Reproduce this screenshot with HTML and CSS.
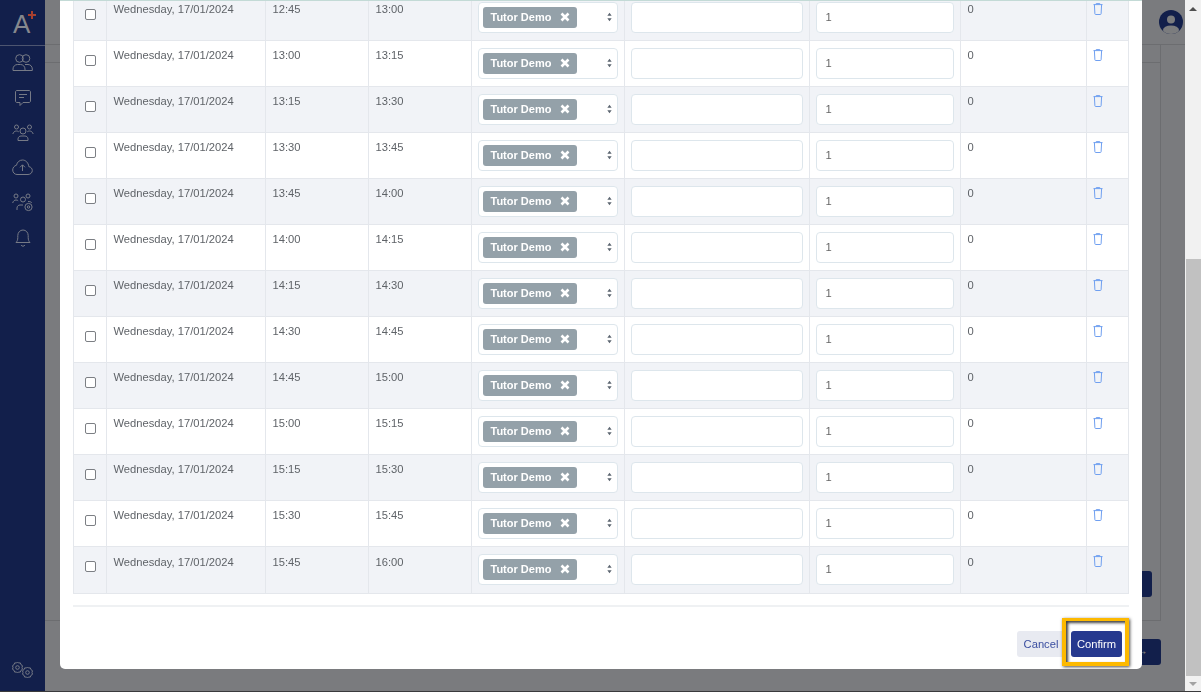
FILE: index.html
```html
<!DOCTYPE html>
<html lang="en">
<head>
<meta charset="utf-8">
<title>Confirm slots</title>
<link rel="stylesheet" href="styles.css">
</head>
<body>
<svg class="defs" aria-hidden="true">
  <symbol id="trash" viewBox="0 0 10 12"><path d="M3.2 1.2V.6h3.6v.6M.5 1.6h9M1.4 1.6l.5 9.2c0 .4.3.7.7.7h4.8c.4 0 .7-.3.7-.7l.5-9.2" fill="none" stroke="currentColor" stroke-width="1"/></symbol>
  <symbol id="updown" viewBox="0 0 6 10"><path d="M3 0l2.6 3.6H.4zM3 10L.4 6.400h5.200z" fill="currentColor"/></symbol>
  <symbol id="close" viewBox="0 0 10 10"><path d="M1.500 1.500l7 7M8.500 1.500l-7 7" stroke="currentColor" stroke-width="2.600" fill="none"/></symbol>
</svg>
<div class="app">
  <nav class="sidebar">
    <div class="logo"><span class="logo-a">A</span><span class="plus"></span></div>
    <ul class="nav-list">
      <li><svg width="21" height="18" viewBox="0 0 21 18" class="nav-ico"><circle cx="7.500" cy="4.500" r="3.800"/><circle cx="14" cy="4.500" r="3.800"/><path d="M1 16.500v-1.500c0-2.500 2-4.500 4.500-4.500h3c2.500 0 4.500 2 4.500 4.500v1.500zM13 10.500h3c2.500 0 4.300 2 4.300 4.500v1.500H13"/></svg></li>
      <li><svg width="18" height="18" viewBox="0 0 18 18" class="nav-ico"><path d="M3 1.500h12c.9 0 1.500.6 1.500 1.500v9c0 .9-.6 1.500-1.500 1.500H9l-3 3v-3H3c-.9 0-1.500-.6-1.500-1.500V3c0-.9.6-1.500 1.500-1.500zM5 5.500h8M5 8.500h5"/></svg></li>
      <li><svg width="22" height="18" viewBox="0 0 22 18" class="nav-ico"><circle cx="11" cy="7" r="3"/><circle cx="4.500" cy="3" r="2"/><circle cx="17.500" cy="3" r="2"/><path d="M6 16.500v-1.500c0-1.800 1.500-3 3-3h4c1.500 0 3 1.200 3 3v1.500zM.8 10c.6-1.800 1.800-3 3.700-3 1 0 1.700.3 2.200.8M21.200 10c-.6-1.800-1.800-3-3.700-3-1 0-1.700.3-2.200.8"/></svg></li>
      <li><svg width="21" height="17" viewBox="0 0 21 17" class="nav-ico"><path d="M5 15.500h11c2.500 0 4.300-1.800 4.300-4 0-2-1.500-3.600-3.500-3.900C16.500 3.800 13.700 1 10.500 1 7.500 1 5 3.200 4.500 6.200 2.300 6.700.7 8.700.7 11c0 2.500 2 4.500 4.300 4.500zM10.500 12V6M8 8.300l2.500-2.500L13 8.300"/></svg></li>
      <li><svg width="21" height="19" viewBox="0 0 21 19" class="nav-ico"><circle cx="11" cy="6.500" r="2.500"/><circle cx="4" cy="3" r="2"/><circle cx="16" cy="3" r="2"/><path d="M.7 10c.5-2 1.700-3 3.300-3 1 0 1.700.3 2.200.8M5 17v-2c0-1.800 1.500-3 3-3h3M16 8.500c1.500 0 3 .3 3.800 1.200"/><circle cx="16.500" cy="14" r="3.600"/><circle cx="16.500" cy="14" r="1.200"/></svg></li>
      <li><svg width="16" height="19" viewBox="0 0 16 19" class="nav-ico"><path d="M1 14.500c1.200-1.300 1.800-2.500 1.800-5V7.500C2.800 4.500 5 2 8 2s5.200 2.500 5.200 5.500v2c0 2.500.6 3.700 1.800 5zM6 17c.5.800 1.200 1.200 2 1.200s1.500-.4 2-1.200"/></svg></li>
    </ul>
    <svg class="nav-ico gear" width="22" height="18" viewBox="0 0 22 18"><path d="M5.500 1l1 1 1.800-.1.700 1.800 1.500 1-.5 1.800.5 1.800-1.500 1-.7 1.800-1.800-.1-1 1-1-1-1.800.1-.7-1.800-1.500-1 .5-1.800-.5-1.800 1.500-1 .7-1.800 1.800.1z"/><circle cx="5.500" cy="6.500" r="1.800"/><path d="M15.500 6l1 1 1.800-.1.700 1.800 1.500 1-.5 1.800.5 1.800-1.500 1-.7 1.800-1.800-.1-1 1-1-1-1.800.1-.7-1.800-1.500-1 .5-1.800-.5-1.800 1.500-1 .7-1.800 1.800.1z"/><circle cx="15.500" cy="11.500" r="1.800"/></svg>
  </nav>
  <main class="page">
    <header class="topbar">
      <svg class="avatar" width="24" height="24" viewBox="0 0 24 24"><defs><clipPath id="round"><circle cx="12" cy="12" r="12"/></clipPath></defs><circle cx="12" cy="12" r="12" fill="#121f4b"/><g clip-path="url(#round)" fill="#7b7c7e"><circle cx="12" cy="9.500" r="4"/><ellipse cx="12" cy="20" rx="8" ry="4.500"/></g></svg>
    </header>
    <div class="backdrop-panel">
      <div class="panel-head"></div>
      <div class="panel-action"></div>
    </div>
    <div class="next-btn"><span class="next-arrow">→</span></div>
  </main>
  <div class="scrollbar">
    <span class="arrow-up"></span>
    <div class="track"><div class="thumb"></div></div>
    <span class="arrow-down"></span>
  </div>
</div>

<div class="modal">
  <table class="slots">
    <colgroup><col class="c1"><col class="c2"><col class="c3"><col class="c4"><col class="c5"><col class="c6"><col class="c7"><col class="c8"><col class="c9"></colgroup>
    <tbody>
      <tr><td class="check"><span class="box"></span></td><td>Wednesday, 17/01/2024</td><td>12:45</td><td>13:00</td><td class="ctl"><div class="select"><span class="tag">Tutor Demo<svg class="x"><use href="#close"/></svg></span><svg class="updown"><use href="#updown"/></svg></div></td><td class="ctl"><div class="input"></div></td><td class="ctl"><div class="input">1</div></td><td>0</td><td class="del"><svg class="trash"><use href="#trash"/></svg></td></tr>
      <tr><td class="check"><span class="box"></span></td><td>Wednesday, 17/01/2024</td><td>13:00</td><td>13:15</td><td class="ctl"><div class="select"><span class="tag">Tutor Demo<svg class="x"><use href="#close"/></svg></span><svg class="updown"><use href="#updown"/></svg></div></td><td class="ctl"><div class="input"></div></td><td class="ctl"><div class="input">1</div></td><td>0</td><td class="del"><svg class="trash"><use href="#trash"/></svg></td></tr>
      <tr><td class="check"><span class="box"></span></td><td>Wednesday, 17/01/2024</td><td>13:15</td><td>13:30</td><td class="ctl"><div class="select"><span class="tag">Tutor Demo<svg class="x"><use href="#close"/></svg></span><svg class="updown"><use href="#updown"/></svg></div></td><td class="ctl"><div class="input"></div></td><td class="ctl"><div class="input">1</div></td><td>0</td><td class="del"><svg class="trash"><use href="#trash"/></svg></td></tr>
      <tr><td class="check"><span class="box"></span></td><td>Wednesday, 17/01/2024</td><td>13:30</td><td>13:45</td><td class="ctl"><div class="select"><span class="tag">Tutor Demo<svg class="x"><use href="#close"/></svg></span><svg class="updown"><use href="#updown"/></svg></div></td><td class="ctl"><div class="input"></div></td><td class="ctl"><div class="input">1</div></td><td>0</td><td class="del"><svg class="trash"><use href="#trash"/></svg></td></tr>
      <tr><td class="check"><span class="box"></span></td><td>Wednesday, 17/01/2024</td><td>13:45</td><td>14:00</td><td class="ctl"><div class="select"><span class="tag">Tutor Demo<svg class="x"><use href="#close"/></svg></span><svg class="updown"><use href="#updown"/></svg></div></td><td class="ctl"><div class="input"></div></td><td class="ctl"><div class="input">1</div></td><td>0</td><td class="del"><svg class="trash"><use href="#trash"/></svg></td></tr>
      <tr><td class="check"><span class="box"></span></td><td>Wednesday, 17/01/2024</td><td>14:00</td><td>14:15</td><td class="ctl"><div class="select"><span class="tag">Tutor Demo<svg class="x"><use href="#close"/></svg></span><svg class="updown"><use href="#updown"/></svg></div></td><td class="ctl"><div class="input"></div></td><td class="ctl"><div class="input">1</div></td><td>0</td><td class="del"><svg class="trash"><use href="#trash"/></svg></td></tr>
      <tr><td class="check"><span class="box"></span></td><td>Wednesday, 17/01/2024</td><td>14:15</td><td>14:30</td><td class="ctl"><div class="select"><span class="tag">Tutor Demo<svg class="x"><use href="#close"/></svg></span><svg class="updown"><use href="#updown"/></svg></div></td><td class="ctl"><div class="input"></div></td><td class="ctl"><div class="input">1</div></td><td>0</td><td class="del"><svg class="trash"><use href="#trash"/></svg></td></tr>
      <tr><td class="check"><span class="box"></span></td><td>Wednesday, 17/01/2024</td><td>14:30</td><td>14:45</td><td class="ctl"><div class="select"><span class="tag">Tutor Demo<svg class="x"><use href="#close"/></svg></span><svg class="updown"><use href="#updown"/></svg></div></td><td class="ctl"><div class="input"></div></td><td class="ctl"><div class="input">1</div></td><td>0</td><td class="del"><svg class="trash"><use href="#trash"/></svg></td></tr>
      <tr><td class="check"><span class="box"></span></td><td>Wednesday, 17/01/2024</td><td>14:45</td><td>15:00</td><td class="ctl"><div class="select"><span class="tag">Tutor Demo<svg class="x"><use href="#close"/></svg></span><svg class="updown"><use href="#updown"/></svg></div></td><td class="ctl"><div class="input"></div></td><td class="ctl"><div class="input">1</div></td><td>0</td><td class="del"><svg class="trash"><use href="#trash"/></svg></td></tr>
      <tr><td class="check"><span class="box"></span></td><td>Wednesday, 17/01/2024</td><td>15:00</td><td>15:15</td><td class="ctl"><div class="select"><span class="tag">Tutor Demo<svg class="x"><use href="#close"/></svg></span><svg class="updown"><use href="#updown"/></svg></div></td><td class="ctl"><div class="input"></div></td><td class="ctl"><div class="input">1</div></td><td>0</td><td class="del"><svg class="trash"><use href="#trash"/></svg></td></tr>
      <tr><td class="check"><span class="box"></span></td><td>Wednesday, 17/01/2024</td><td>15:15</td><td>15:30</td><td class="ctl"><div class="select"><span class="tag">Tutor Demo<svg class="x"><use href="#close"/></svg></span><svg class="updown"><use href="#updown"/></svg></div></td><td class="ctl"><div class="input"></div></td><td class="ctl"><div class="input">1</div></td><td>0</td><td class="del"><svg class="trash"><use href="#trash"/></svg></td></tr>
      <tr><td class="check"><span class="box"></span></td><td>Wednesday, 17/01/2024</td><td>15:30</td><td>15:45</td><td class="ctl"><div class="select"><span class="tag">Tutor Demo<svg class="x"><use href="#close"/></svg></span><svg class="updown"><use href="#updown"/></svg></div></td><td class="ctl"><div class="input"></div></td><td class="ctl"><div class="input">1</div></td><td>0</td><td class="del"><svg class="trash"><use href="#trash"/></svg></td></tr>
      <tr><td class="check"><span class="box"></span></td><td>Wednesday, 17/01/2024</td><td>15:45</td><td>16:00</td><td class="ctl"><div class="select"><span class="tag">Tutor Demo<svg class="x"><use href="#close"/></svg></span><svg class="updown"><use href="#updown"/></svg></div></td><td class="ctl"><div class="input"></div></td><td class="ctl"><div class="input">1</div></td><td>0</td><td class="del"><svg class="trash"><use href="#trash"/></svg></td></tr>
    </tbody>
  </table>
  <footer class="modal-foot">
    <button class="btn btn-cancel" type="button">Cancel</button>
    <button class="btn btn-confirm" type="button">Confirm</button>
    <span class="highlight"></span>
  </footer>
</div>
</body>
</html>
```

FILE: styles.css
```css
* { box-sizing: border-box; }
html, body { margin: 0; height: 100%; overflow: hidden; }
body { font-family: "Liberation Sans", Arial, sans-serif; font-size: 11.200px; color: #5f6368; background: #7a7b7e; }
.defs { position: absolute; width: 0; height: 0; }

.app { display: flex; width: 1201px; height: 692px; border-bottom: 1px solid #3a3a3c; }

.sidebar { width: 45px; flex: none; background: #121f4b; display: flex; flex-direction: column; align-items: center; }
.logo { width: 45px; height: 46px; border-bottom: 1px solid #4d5570; position: relative; }
.logo-a { position: absolute; left: 13px; top: 9px; font-size: 26px; line-height: 30px; color: #85878d; }
.plus { position: absolute; left: 28px; top: 11px; width: 8px; height: 8px; background: linear-gradient(#a8402f, #a8402f) center / 8px 2px no-repeat, linear-gradient(#a8402f, #a8402f) center / 2px 8px no-repeat; }
.nav-list { list-style: none; margin: 0; padding: 0; width: 45px; }
.nav-list li { height: 34.800px; display: flex; align-items: center; justify-content: center; }
.nav-ico, .nav-list li svg { fill: none; stroke: #767a86; stroke-width: 1; }
.gear { margin-top: auto; margin-bottom: 12px; }

.page { flex: 1; display: flex; flex-direction: column; position: relative; min-width: 0; background: #7a7b7e; }
.topbar { height: 45px; flex: none; display: flex; align-items: center; justify-content: flex-end; padding-right: 2px; border-bottom: 1px solid #6c6d70; }
.avatar { display: block; }
.backdrop-panel { width: 1116px; height: 576px; border-right: 1px solid #6c6d70; border-bottom: 1px solid #6c6d70; position: relative; align-self: flex-start; }
.panel-head { height: 18px; border-bottom: 1px solid #6c6d70; }
.panel-action { position: absolute; right: 8px; top: 526px; width: 60px; height: 26px; background: #121f4b; border-radius: 3px; }
.next-btn { position: absolute; left: 1056px; top: 639px; width: 60px; height: 26px; background: #121f4b; border-radius: 3px; color: #7a7b7e; text-align: right; padding-right: 13px; line-height: 24px; font-size: 13px; }

.scrollbar { width: 16px; flex: none; background: #f1f1f1; display: flex; flex-direction: column; align-items: center; position: relative; }
.arrow-up, .arrow-down { height: 17px; flex: none; display: block; width: 16px; position: relative; }
.arrow-up::after, .arrow-down::after { content: ""; position: absolute; left: 4px; border-left: 4px solid transparent; border-right: 4px solid transparent; }
.arrow-up::after { top: 7px; border-bottom: 4px solid #505050; }
.arrow-down::after { top: 6px; border-top: 4px solid #a3a3a3; }
.track { flex: 1; width: 100%; padding-top: 242px; padding-left: 1px; }
.thumb { height: 417px; background: #c1c1c1; }

.modal { position: absolute; left: 60px; top: 0; width: 1082px; height: 669px; background: #fff; border-top: 1px solid #c3dad6; border-radius: 0 0 5px 5px; padding: 0 13px; overflow: hidden; will-change: transform; }
.slots { border-collapse: collapse; table-layout: fixed; width: 1055px; margin-top: -7px; color: #5f6368; font-size: 11.200px; }
.c1 { width: 33px; } .c2 { width: 159px; } .c3 { width: 103px; } .c4 { width: 103px; } .c5 { width: 153px; } .c6 { width: 185px; } .c7 { width: 151px; } .c8 { width: 126px; } .c9 { width: 42px; }
.slots tr { height: 46px; }
.slots tr:nth-child(odd) { background: #f1f3f7; }
.slots td { border: 1px solid #e4e7ec; padding: 7px 6.500px; vertical-align: top; line-height: 14px; height: 46px; }
.slots tr:last-child td { height: 47px; padding-top: 8px; }
.slots td.check, .slots tr:last-child td.check { padding: 14px 0 0 11px; }
.box { display: block; width: 11px; height: 11px; margin-top: 0; border: 1px solid #7c7f84; border-radius: 2px; background: #fff; }
.slots td.ctl, .slots tr:last-child td.ctl { padding: 7px 6.500px 0 5.500px; }
.select { height: 31px; display: flex; align-items: center; padding-left: 4px; background: #fff; border: 1px solid #dde6ec; border-radius: 4px; position: relative; }
.tag { width: 94px; height: 21px; display: flex; align-items: center; padding: 0 0 1px 8px; background: #94a1a9; color: #fff; font-weight: 700; font-size: 11px; border-radius: 3px; }
.x { width: 10px; height: 10px; margin: 0 0 0 9px; color: #fff; }
.updown { position: absolute; right: 5px; top: 9px; width: 5px; height: 10px; color: #5c6570; }
.input { height: 31px; display: flex; align-items: center; padding: 0 0 2px 9px; background: #fff; border: 1px solid #dde6ec; border-radius: 4px; color: #666; }
.slots td.del, .slots tr:last-child td.del { padding: 8px 0 0 6px; }
.trash { display: block; width: 10px; height: 12px; color: #6f9ff0; }

.modal-foot { position: relative; margin-top: 11px; border-top: 2px solid #eff1f3; padding-top: 24px; height: 64px; display: flex; justify-content: flex-end; gap: 6px; padding-right: 7px; }
.btn { height: 26px; border: 0; border-radius: 3px; font-family: inherit; font-size: 11.200px; padding: 0; }
.btn-cancel { width: 48px; background: #e8eaf1; color: #3a4ea0; }
.btn-confirm { width: 51px; background: #26398f; color: #fff; }
.highlight { position: absolute; left: 989px; top: 11px; width: 67px; height: 48px; border: 4px solid #fdb900; border-top-width: 3px; box-shadow: 1px 1px 3px rgba(0,0,0,.7), inset 2px 2px 3px rgba(0,0,0,.75); pointer-events: none; }
```
